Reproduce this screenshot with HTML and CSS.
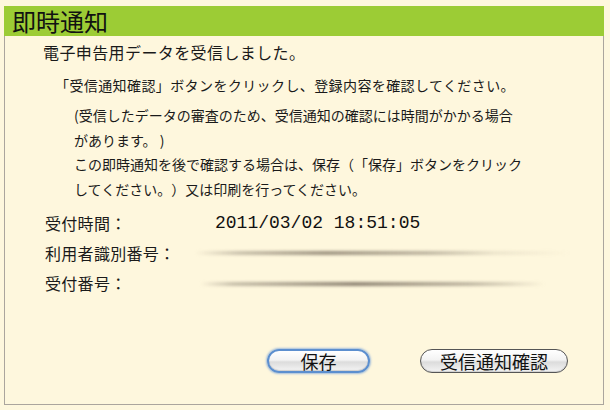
FILE: index.html
```html
<!DOCTYPE html>
<html lang="ja">

<head>
  <meta charset="UTF-8">
  <meta name="viewport" content="width=device-width, initial-scale=1.0">
  <title>即時通知</title>
  <link rel="stylesheet" href="styles.css">
</head>

<body>

  <!-- Notice Panel -->
  <div class="notice">
    <div class="notice-title">即時通知</div>

    <div class="notice-body">
      <p class="lead">電子申告用データを受信しました。</p>

      <p class="note note-first">「受信通知確認」ボタンをクリックし、登録内容を確認してください。</p>
      <p class="note">(受信したデータの審査のため、受信通知の確認には時間がかかる場合<br>があります。 )<br>この即時通知を後で確認する場合は、保存（「保存」ボタンをクリック<br>してください。）又は印刷を行ってください。</p>

      <div class="fields">
        <div class="field">
          <span class="label">受付時間：</span>
          <span class="value mono">2011/03/02 18:51:05</span>
        </div>
        <div class="field">
          <span class="label">利用者識別番号：</span>
          <span class="value"><span class="blur blur-id"></span></span>
        </div>
        <div class="field">
          <span class="label">受付番号：</span>
          <span class="value"><span class="blur blur-no"></span></span>
        </div>
      </div>

      <div class="actions">
        <button class="btn btn-save">保存</button>
        <button class="btn btn-confirm">受信通知確認</button>
      </div>
    </div>
  </div>

</body>

</html>
```

FILE: styles.css
```css
body {
  margin: 0;
  padding: 6px 0 0 4px;
  background: #fef7dd;
  font-family: "Noto Sans CJK JP", "Noto Sans", sans-serif;
  color: #1a1a1a;
  text-spacing-trim: space-all;
}

.notice {
  width: 600px;
}

.notice-title {
  height: 30px;
  line-height: 30px;
  padding-left: 8px;
  background: #9ccc35;
  font-size: 24px;
  color: #111;
}

.notice-body {
  box-sizing: border-box;
  height: 369px;
  border: 1px solid #aba59d;
  border-top: none;
  padding-top: 4px;
}

.notice-body p {
  margin: 0;
}

.lead {
  margin-left: 38px !important;
  font-size: 16px;
  line-height: 24px;
  letter-spacing: 0.4px;
}

.note {
  font-size: 14px;
  line-height: 24.4px;
  margin-left: 69px !important;
  margin-top: 6px !important;
}

.note-first {
  margin-left: 50px !important;
  margin-top: 9px !important;
  letter-spacing: 0.4px;
}

.fields {
  margin: 7px 0 0 40px;
}

.field {
  display: flex;
  align-items: center;
  height: 30px;
  font-size: 16px;
}

.label {
  width: 170px;
  letter-spacing: 0.3px;
}

.value {
  position: relative;
  flex: 1;
  height: 30px;
  display: flex;
  align-items: center;
}

.mono {
  font-family: "Liberation Mono", "DejaVu Sans Mono", monospace;
  font-size: 18px;
  color: #111;
}

.blur {
  position: absolute;
  top: 13px;
  height: 4px;
  filter: blur(1.5px);
  border-radius: 2px;
}

.blur-id {
  left: -20px;
  width: 375px;
  background: linear-gradient(to right,
      rgba(160, 150, 130, 0) 0%,
      rgba(160, 150, 132, 0.55) 12%,
      rgba(140, 130, 112, 0.85) 35%,
      rgba(150, 140, 122, 0.6) 62%,
      rgba(170, 160, 140, 0.2) 80%,
      rgba(170, 160, 140, 0) 100%);
}

.blur-no {
  left: -15px;
  top: 14px;
  width: 345px;
  background: linear-gradient(to right,
      rgba(160, 150, 130, 0) 0%,
      rgba(155, 145, 128, 0.55) 10%,
      rgba(130, 120, 104, 0.9) 45%,
      rgba(150, 140, 122, 0.6) 78%,
      rgba(170, 160, 140, 0) 100%);
}

.actions {
  display: flex;
  justify-content: flex-end;
  gap: 50px;
  margin-top: 51px;
  padding-right: 35px;
}

.btn {
  box-sizing: border-box;
  height: 24px;
  padding: 0;
  font-family: "Noto Sans CJK JP", sans-serif;
  font-size: 18px;
  line-height: 20px;
  color: #111;
  border: 1px solid #555;
  border-radius: 12px;
  background: linear-gradient(to bottom, #ffffff 0%, #f3f3f3 45%, #dcdcdc 55%, #f4f4f4 100%);
  box-shadow: inset 0 -1px 1px rgba(0, 0, 0, 0.15);
}

.btn-save {
  width: 103px;
  border: 2px solid #5c8fcf;
  box-shadow: 0 0 2px 1px rgba(100, 150, 220, 0.6), inset 0 -1px 1px rgba(0, 0, 0, 0.15);
}

.btn-confirm {
  width: 148px;
}
```
